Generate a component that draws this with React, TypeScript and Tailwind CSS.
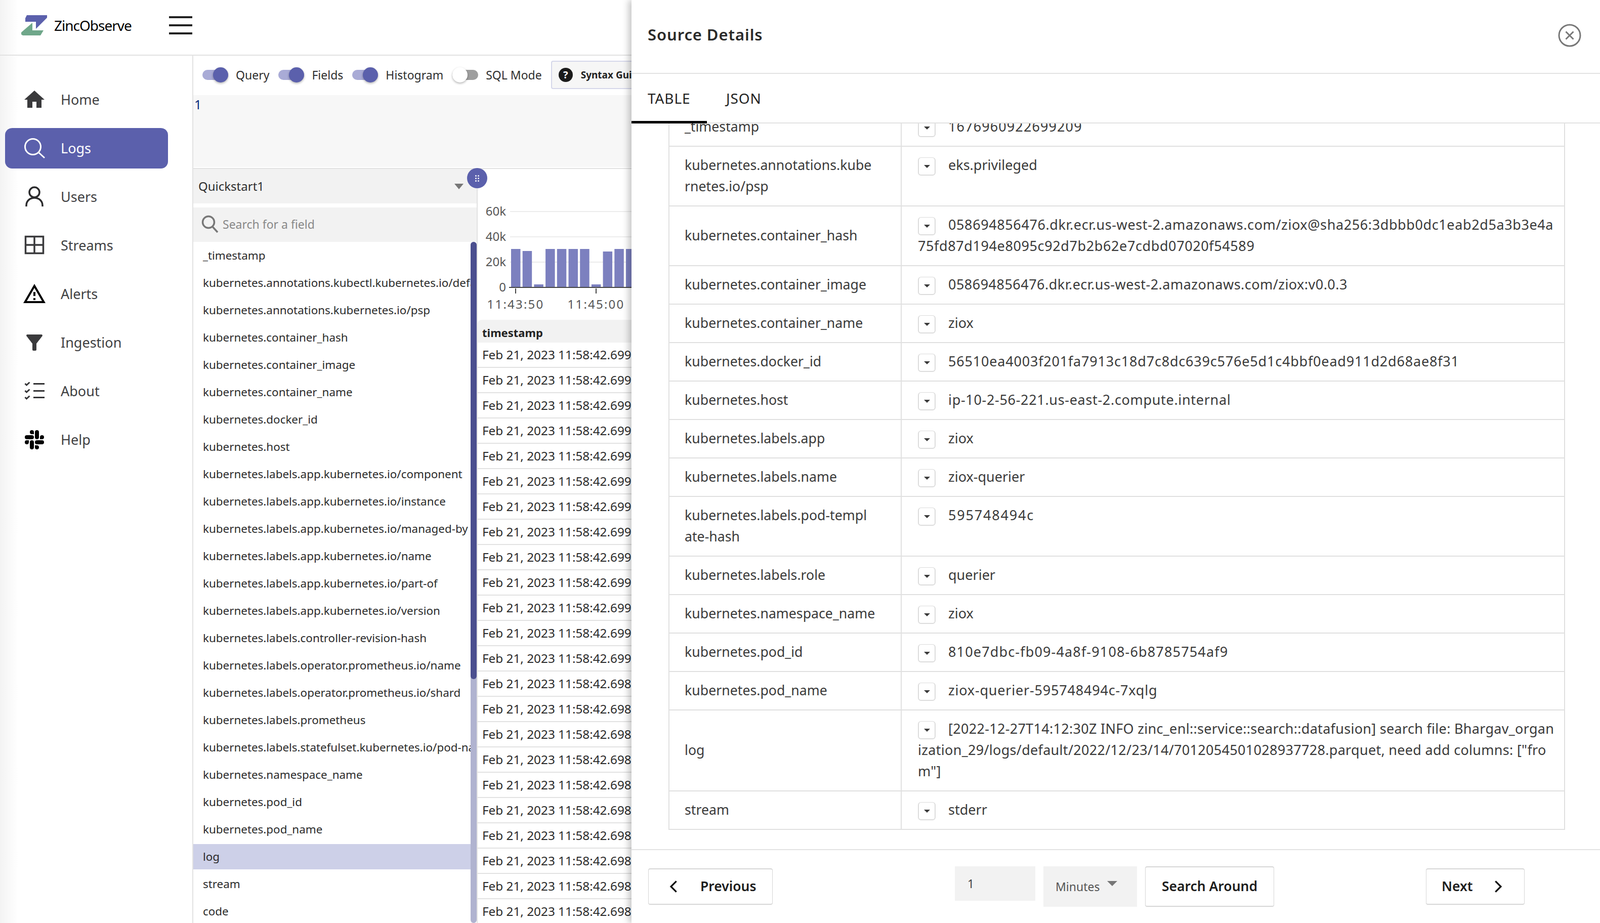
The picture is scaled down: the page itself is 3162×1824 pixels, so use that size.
import { SiSlack } from "react-icons/si";

const fields = [
  "_timestamp",
  "kubernetes.annotations.kubectl.kubernetes.io/default-container",
  "kubernetes.annotations.kubernetes.io/psp",
  "kubernetes.container_hash",
  "kubernetes.container_image",
  "kubernetes.container_name",
  "kubernetes.docker_id",
  "kubernetes.host",
  "kubernetes.labels.app.kubernetes.io/component",
  "kubernetes.labels.app.kubernetes.io/instance",
  "kubernetes.labels.app.kubernetes.io/managed-by",
  "kubernetes.labels.app.kubernetes.io/name",
  "kubernetes.labels.app.kubernetes.io/part-of",
  "kubernetes.labels.app.kubernetes.io/version",
  "kubernetes.labels.controller-revision-hash",
  "kubernetes.labels.operator.prometheus.io/name",
  "kubernetes.labels.operator.prometheus.io/shard",
  "kubernetes.labels.prometheus",
  "kubernetes.labels.statefulset.kubernetes.io/pod-name",
  "kubernetes.namespace_name",
  "kubernetes.pod_id",
  "kubernetes.pod_name",
  "log",
  "stream",
  "code",
];

// the reference font has wider digits, so digit heavy values get some tracking
const details = [
  { key: "_timestamp", value: "1676960922699209", cls: "tracking-[1.1px]" },
  { key: "kubernetes.annotations.kube\nrnetes.io/psp", value: "eks.privileged", cls: "" },
  {
    key: "kubernetes.container_hash",
    value:
      "058694856476.dkr.ecr.us-west-2.amazonaws.com/ziox@sha256:3dbbb0dc1eab2d5a3b3e4a\n75fd87d194e8095c92d7b2b62e7cdbd07020f54589",
    cls: "tracking-[0.6px]",
  },
  { key: "kubernetes.container_image", value: "058694856476.dkr.ecr.us-west-2.amazonaws.com/ziox:v0.0.3", cls: "tracking-[0.47px]" },
  { key: "kubernetes.container_name", value: "ziox", cls: "" },
  { key: "kubernetes.docker_id", value: "56510ea4003f201fa7913c18d7c8dc639c576e5d1c4bbf0ead911d2d68ae8f31", cls: "tracking-[0.8px]" },
  { key: "kubernetes.host", value: "ip-10-2-56-221.us-east-2.compute.internal", cls: "tracking-[0.68px]" },
  { key: "kubernetes.labels.app", value: "ziox", cls: "" },
  { key: "kubernetes.labels.name", value: "ziox-querier", cls: "" },
  { key: "kubernetes.labels.pod-templ\nate-hash", value: "595748494c", cls: "tracking-[1.8px]" },
  { key: "kubernetes.labels.role", value: "querier", cls: "" },
  { key: "kubernetes.namespace_name", value: "ziox", cls: "" },
  { key: "kubernetes.pod_id", value: "810e7dbc-fb09-4a8f-9108-6b8785754af9", cls: "tracking-[1.15px]" },
  { key: "kubernetes.pod_name", value: "ziox-querier-595748494c-7xqlg", cls: "tracking-[0.8px]" },
  {
    key: "log",
    value:
      '[2022-12-27T14:12:30Z INFO zinc_enl::service::search::datafusion] search file: Bhargav_organ\nization_29/logs/default/2022/12/23/14/7012054501028937728.parquet, need add columns: ["fro\nm"]',
    cls: "tracking-[0.3px]",
  },
  { key: "stream", value: "stderr", cls: "" },
];

const bars = [76, 72, 6, 76, 76, 76, 76, 6, 71, 76, 76];

function HomeIcon() {
  return (
    <svg viewBox="0 0 24 24" className="w-12 h-12 fill-[#3a3a3c]">
      <path d="M10 20v-6h4v6h5v-8h3L12 3 2 12h3v8z" />
    </svg>
  );
}

function LogsIcon() {
  return (
    <svg viewBox="0 0 48 48" className="w-12 h-12 fill-none stroke-white stroke-[3]">
      <circle cx="21" cy="21" r="15.5" />
      <path d="M32 32l12 11" />
    </svg>
  );
}

function UsersIcon() {
  return (
    <svg viewBox="0 0 48 48" className="w-12 h-12 fill-none stroke-[#2b2b2d] stroke-[3.5]">
      <circle cx="24" cy="15" r="10" />
      <path d="M8 43v-2c0-9 7-15 16-15s16 6 16 15v2" />
    </svg>
  );
}

function StreamsIcon() {
  return (
    <svg viewBox="0 0 48 48" className="w-12 h-12 fill-none stroke-[#3a3a3c] stroke-[3.5]">
      <path d="M6.5 6.5h35v33h-35zM24 6.5v33M6.5 23h35" />
    </svg>
  );
}

function AlertsIcon() {
  return (
    <svg viewBox="0 0 24 24" className="w-12 h-12 fill-black">
      <path d="M12 5.99 19.53 19H4.47L12 5.99M12 2 1 21h22L12 2zm1 14h-2v2h2v-2zm0-6h-2v4h2v-4z" />
    </svg>
  );
}

function IngestionIcon() {
  return (
    <svg viewBox="0 0 24 24" className="w-12 h-12 fill-[#3a3a3c]">
      <path d="M4.25 5.61C6.27 8.2 10 13 10 13v6c0 .55.45 1 1 1h2c.55 0 1-.45 1-1v-6s3.72-4.8 5.74-7.39c.51-.66.04-1.61-.79-1.61H5.04c-.83 0-1.3.95-.79 1.61z" />
    </svg>
  );
}

function AboutIcon() {
  return (
    <svg viewBox="0 0 48 48" className="w-12 h-12 fill-none stroke-[#333335] stroke-[3]">
      <path d="M22 9.5h22M22 23.5h22M22 36.5h22" />
      <path d="M5.5 9l3 3 6-5.5M5.5 23l3 3 6-5.5M5.5 36l3 3 6-5.5" />
    </svg>
  );
}

const navItems = [
  { label: "Home", icon: <HomeIcon /> },
  { label: "Logs", icon: <LogsIcon />, active: true },
  { label: "Users", icon: <UsersIcon /> },
  { label: "Streams", icon: <StreamsIcon /> },
  { label: "Alerts", icon: <AlertsIcon /> },
  { label: "Ingestion", icon: <IngestionIcon /> },
  { label: "About", icon: <AboutIcon /> },
  {
    label: "Help",
    icon: (
      <span className="w-12 h-12 flex items-center justify-center">
        <SiSlack className="w-[38px] h-[38px] text-black" />
      </span>
    ),
  },
];

function Toggle({ on }: { on?: boolean }) {
  return (
    <div
      className={`w-[51px] h-[20px] rounded-full flex items-center ${
        on ? "bg-[#a9abd6] justify-end" : "bg-[#9e9e9e] justify-start"
      }`}
    >
      <div
        className={`w-[30px] h-[30px] shrink-0 rounded-full shadow-[0_2px_4px_rgba(0,0,0,0.3)] ${
          on ? "bg-[#5b60ac]" : "bg-white"
        }`}
      />
    </div>
  );
}

function ToggleLabel({ on, label }: { on?: boolean; label: string }) {
  return (
    <div className="flex items-center gap-[15px]">
      <Toggle on={on} />
      <span className="text-[23px] text-[#2f2f2f]">{label}</span>
    </div>
  );
}

function CaretButton() {
  return (
    <span className="inline-flex align-top mt-[6px] mr-[25px] w-[35px] h-[36px] rounded-[6px] border-2 border-t border-[#dcdcdc] items-center justify-center">
      <span className="w-0 h-0 border-x-[6px] border-x-transparent border-t-[6px] border-t-[#3a3a3a]" />
    </span>
  );
}

function Footer() {
  const btn =
    "h-[72px] rounded-[4px] border border-y-2 border-[#d6d6d6] flex items-center text-[26.5px] font-semibold text-[#1d1d1d]";
  return (
    <div className="h-[146px] shrink-0 border-t-2 border-[#e2e2e2] pt-[32px] pl-[33px] pr-[149px] flex items-start">
      <button className={`${btn} w-[246px] mt-[4px] pl-[34px]`}>
        <svg viewBox="0 0 24 24" className="w-8 h-8 fill-none stroke-[#111] stroke-[2.4]">
          <path d="M15.5 4l-8 8 8 8" />
        </svg>
        <span className="ml-[36px]">Previous</span>
      </button>
      <div className="ml-[360px] flex items-start gap-[16px]">
        <div className="w-[159px] h-[68px] bg-[#f2f2f2] pl-[25px] flex items-center text-[23px] text-[#444]">1</div>
        <div className="w-[185px] h-[80px] bg-[#f2f2f2] pl-[24px] flex items-center gap-[14px] text-[23px] text-[#555]">
          Minutes
          <div className="mb-[12px] w-0 h-0 border-x-[10px] border-x-transparent border-t-[10px] border-t-[#777]" />
        </div>
        <button className={`${btn} w-[255px] h-[80px] justify-center`}>Search Around</button>
      </div>
      <button className={`${btn} w-[195px] mt-[4px] ml-auto pl-[30px]`}>
        Next
        <svg viewBox="0 0 24 24" className="ml-[33px] w-8 h-8 fill-none stroke-[#111] stroke-[2.4]">
          <path d="M8.5 4l8 8-8 8" />
        </svg>
      </button>
    </div>
  );
}

function SourceDetails() {
  return (
    <div className="absolute left-[1248px] top-0 w-[1914px] h-full bg-white flex flex-col shadow-[-6px_0_12px_rgba(0,0,0,0.22)]">
      <div className="h-[146px] shrink-0 border-b-2 border-[#e2e2e2] pl-[32px] pr-[36px] pb-[4px] flex items-center justify-between">
        <span className="mb-[4px] text-[31px] tracking-[0.9px] font-semibold text-[#2a2a2a]">Source Details</span>
        <svg viewBox="0 0 48 48" className="w-12 h-12 fill-none stroke-[#777] stroke-[3]">
          <circle cx="24" cy="24" r="21" />
          <path d="M16.5 16.5l15 15M31.5 16.5l-15 15" />
        </svg>
      </div>
      <div className="h-[98px] shrink-0 border-b-2 border-[#e2e2e2] flex text-[28px] tracking-[0.9px] text-[#222]">
        <div className="w-[149px] h-[98px] border-b-[5px] border-black pl-[32px] pt-[27px]">TABLE</div>
        <div className="ml-[38px] pt-[27px]">JSON</div>
      </div>
      <div className="flex-1 overflow-hidden">
        <div className="ml-[73px] w-[1772px] -mt-[32px] border-x-2 border-t-2 border-[#e0e0e0] text-[27px] leading-[42px] text-[#3a3a3a]">
          {details.map((row) => (
            <div key={row.key} className="flex border-b-2 border-[#e0e0e0]">
              <div className="w-[459px] shrink-0 border-r-2 border-[#e0e0e0] pl-[30px] pr-[32px] pt-[15px] pb-[17px] flex items-center whitespace-pre-line text-[26.7px]">
                {row.key}
              </div>
              <div className={`flex-1 min-w-0 pl-[32px] pt-[15px] pb-[17px] whitespace-pre-line ${row.cls}`}>
                <CaretButton />
                {row.value}
              </div>
            </div>
          ))}
        </div>
      </div>
      <Footer />
    </div>
  );
}

function Histogram() {
  return (
    <svg viewBox="0 0 304 298" className="w-[304px] h-[298px] shrink-0">
      {[84, 134, 184].map((y) => (
        <line key={y} x1="64" x2="304" y1={y} y2={y} stroke="#ececec" strokeWidth="2" />
      ))}
      {bars.map((h, i) => (
        <rect key={i} x={66 + i * 22.7} y={234 - h} width="18.5" height={h} fill="#7c80bf" />
      ))}
      <line x1="62" x2="304" y1="234" y2="234" stroke="#444" strokeWidth="2" />
      <line x1="75" x2="75" y1="236" y2="246" stroke="#444" strokeWidth="2" />
      <line x1="234" x2="234" y1="236" y2="246" stroke="#444" strokeWidth="2" />
      <g fontSize="24" fill="#555" textAnchor="end">
        <text x="56" y="92">60k</text>
        <text x="56" y="142">40k</text>
        <text x="56" y="192">20k</text>
        <text x="56" y="242">0</text>
      </g>
      <g fontSize="24" fill="#555" textAnchor="middle" letterSpacing="2.2">
        <text x="75" y="276">11:43:50</text>
        <text x="234" y="276">11:45:00</text>
      </g>
    </svg>
  );
}

export default function App() {
  return (
    <div className="relative w-[3162px] h-[1824px] overflow-hidden font-['Noto_Sans',sans-serif] bg-linear-to-r from-[#f3f3f3] to-white to-[36px] flex flex-col">
      <header className="h-[110px] shrink-0 border-b-2 border-[#e2e2e2] flex items-center pb-[8px]">
        <svg viewBox="0 0 60 48" className="ml-[38px] w-[60px] h-[48px]">
          <path d="M15 4H55V9L33 31V17H12V10Z" fill="#5b60ac" />
          <path d="M4 38L26 19V34H48L42 44H7L4 42Z" fill="#6fa78a" />
        </svg>
        <span className="ml-[9px] w-[227px] font-['Liberation_Sans'] text-[28px] tracking-[-1px] text-black">ZincObserve</span>
        <div className="w-[46px] flex flex-col gap-[12px]">
          <div className="h-[4px] bg-[#222]" />
          <div className="h-[4px] bg-[#222]" />
          <div className="h-[4px] bg-[#222]" />
        </div>
      </header>
      <div className="flex-1 flex min-h-0">
        <nav className="w-[382px] shrink-0 border-r-2 border-[#e2e2e2] pt-[47px] pl-[10px] flex flex-col gap-4">
          {navItems.map((item) => (
            <div
              key={item.label}
              className={`w-[322px] h-[80px] shrink-0 rounded-[14px] pl-[34px] flex items-center gap-[28px] text-[27px] ${
                item.active ? "bg-[#5b60ac] text-white" : "text-[#404042]"
              }`}
            >
              {item.icon}
              {item.label}
            </div>
          ))}
        </nav>
        <main className="flex-1 min-w-0 flex flex-col">
          <div className="h-[78px] shrink-0 pl-[18px] pb-[2px] flex items-center gap-[18px] whitespace-nowrap">
            <ToggleLabel on label="Query" />
            <ToggleLabel on label="Fields" />
            <ToggleLabel on label="Histogram" />
            <ToggleLabel label="SQL Mode" />
            <div className="h-[56px] w-[300px] border-2 border-[#d5d7ea] rounded-[4px] bg-[#f6f6f6] pl-[13px] flex items-center gap-[16px] text-[19px] font-bold text-[#222]">
              <span className="w-[28px] h-[28px] rounded-full bg-[#1b1b1b] text-white text-[20px] flex items-center justify-center">?</span>
              Syntax Guide
            </div>
          </div>
          <div className="h-[146px] shrink-0 border-b-2 border-[#e2e2e2] pb-[2px]">
            <div className="h-full bg-[#f7f7f7] pl-[2px] text-[25px] text-[#0a2a7a]">1</div>
          </div>
          <div className="flex-1 flex min-h-0">
            <div className="relative w-[562px] shrink-0 border-r-2 border-[#e2e2e2] flex flex-col">
              <div className="h-[68px] shrink-0 bg-[#f2f2f2] pl-[10px] pr-[26px] flex items-center justify-between text-[24px] text-[#2f2f2f]">
                Quickstart1
                <div className="w-0 h-0 border-x-[9px] border-x-transparent border-t-[11px] border-t-[#777]" />
              </div>
              <div className="mt-[8px] h-[68px] shrink-0 bg-[#f2f2f2] pl-[16px] pb-[2px] flex items-center gap-[6px] text-[23px] text-[#888]">
                <svg viewBox="0 0 36 36" className="w-[36px] h-[36px] fill-none stroke-[#777] stroke-[3.5]">
                  <circle cx="14" cy="14" r="11.5" />
                  <path d="M22 23l10 11" />
                </svg>
                Search for a field
              </div>
              <div className="flex-1 flex min-h-0">
                <div className="w-[548px] shrink-0 overflow-hidden pt-[2px]">
                  {fields.map((f) => (
                    <div
                      key={f}
                      className={`h-[50px] mb-[4px] pl-[19px] flex items-center whitespace-nowrap text-[22.4px] text-[#2b2b2b] ${
                        f === "log" ? "bg-[#cdd0e8]" : ""
                      }`}
                    >
                      {f}
                    </div>
                  ))}
                </div>
                <div className="w-[12px] bg-[#b0b3d0] rounded-[6px]">
                  <div className="h-[864px] bg-[#4b4f8f] rounded-[6px]" />
                </div>
              </div>
              <div className="absolute left-[541px] -top-[2px] w-[40px] h-[40px] rounded-full bg-[#5b60ac] grid grid-cols-[3px_3px] gap-[2px] place-content-center">
                {[0, 1, 2, 3, 4, 5].map((d) => (
                  <div key={d} className="w-[3px] h-[3px] rounded-full bg-white" />
                ))}
              </div>
            </div>
            <div className="flex-1 min-w-0 flex flex-col">
              <Histogram />
              <div className="h-[45px] shrink-0 bg-[#f2f2f2] rounded-t-[8px] pl-[9px] pt-[5px] flex items-center text-[22px] font-bold text-[#222]">timestamp</div>
              {Array.from({ length: 23 }, (_, i) => (
                <div key={i} className="h-[50px] shrink-0 border-b-2 border-[#e2e2e2] pl-[9px] flex items-center whitespace-nowrap text-[24.3px] text-[#2b2b2b]">
                  Feb 21, 2023 11:58:42.{i < 13 ? "699" : "698"}
                </div>
              ))}
            </div>
          </div>
        </main>
      </div>
      <SourceDetails />
    </div>
  );
}
